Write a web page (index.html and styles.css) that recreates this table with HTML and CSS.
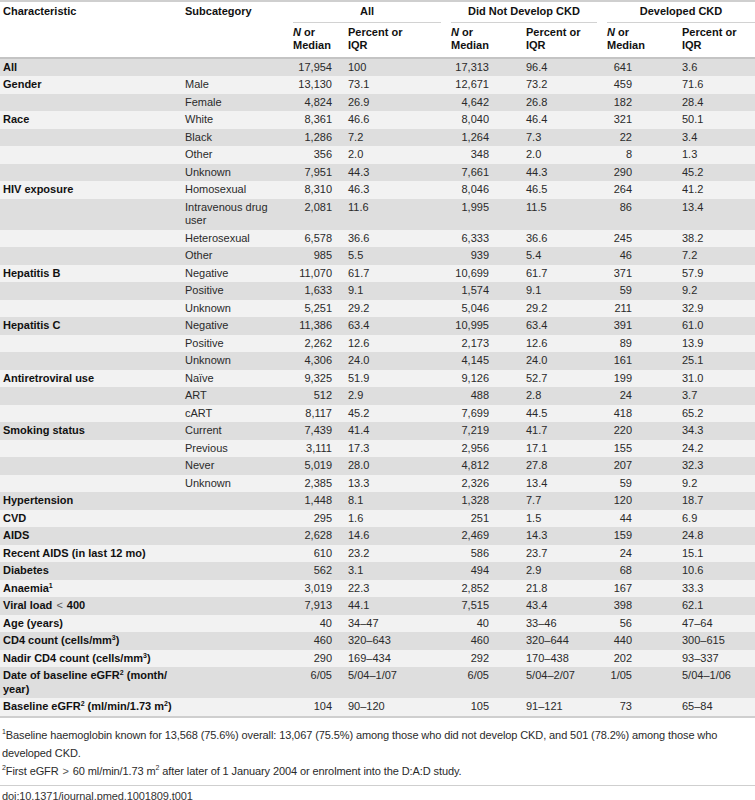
FILE: index.html
```html
<!DOCTYPE html>
<html lang="en">
<head>
    <meta charset="UTF-8">
    <meta name="viewport" content="width=device-width, initial-scale=1.0">
    <title>Table 1. Baseline characteristics</title>
    <link rel="stylesheet" href="styles.css">
</head>
<body>
    <table class="data">
        <colgroup>
            <col class="c-char">
            <col class="c-sub">
            <col class="c-n1">
            <col class="c-p1">
            <col class="c-n2">
            <col class="c-p2">
            <col class="c-n3">
            <col class="c-p3">
        </colgroup>
        <thead>
            <tr class="group-row">
                <th rowspan="2">Characteristic</th>
                <th rowspan="2">Subcategory</th>
                <th colspan="2" class="group"><div>All</div></th>
                <th colspan="2" class="group"><div>Did Not Develop CKD</div></th>
                <th colspan="2" class="group last"><div>Developed CKD</div></th>
            </tr>
            <tr class="sub-row">
                <th><i>N</i> or<br>Median</th>
                <th>Percent or<br>IQR</th>
                <th><i>N</i> or<br>Median</th>
                <th>Percent or<br>IQR</th>
                <th><i>N</i> or<br>Median</th>
                <th>Percent or<br>IQR</th>
            </tr>
        </thead>
        <tbody>
            <tr><th>All</th><td></td><td class="n"><span class="a">17,954</span></td><td>100</td><td class="n"><span class="b">17,313</span></td><td>96.4</td><td class="n"><span class="c">641</span></td><td>3.6</td></tr>
            <tr><th>Gender</th><td>Male</td><td class="n"><span class="a">13,130</span></td><td>73.1</td><td class="n"><span class="b">12,671</span></td><td>73.2</td><td class="n"><span class="c">459</span></td><td>71.6</td></tr>
            <tr><th></th><td>Female</td><td class="n"><span class="a">4,824</span></td><td>26.9</td><td class="n"><span class="b">4,642</span></td><td>26.8</td><td class="n"><span class="c">182</span></td><td>28.4</td></tr>
            <tr><th>Race</th><td>White</td><td class="n"><span class="a">8,361</span></td><td>46.6</td><td class="n"><span class="b">8,040</span></td><td>46.4</td><td class="n"><span class="c">321</span></td><td>50.1</td></tr>
            <tr><th></th><td>Black</td><td class="n"><span class="a">1,286</span></td><td>7.2</td><td class="n"><span class="b">1,264</span></td><td>7.3</td><td class="n"><span class="c">22</span></td><td>3.4</td></tr>
            <tr><th></th><td>Other</td><td class="n"><span class="a">356</span></td><td>2.0</td><td class="n"><span class="b">348</span></td><td>2.0</td><td class="n"><span class="c">8</span></td><td>1.3</td></tr>
            <tr><th></th><td>Unknown</td><td class="n"><span class="a">7,951</span></td><td>44.3</td><td class="n"><span class="b">7,661</span></td><td>44.3</td><td class="n"><span class="c">290</span></td><td>45.2</td></tr>
            <tr><th>HIV exposure</th><td>Homosexual</td><td class="n"><span class="a">8,310</span></td><td>46.3</td><td class="n"><span class="b">8,046</span></td><td>46.5</td><td class="n"><span class="c">264</span></td><td>41.2</td></tr>
            <tr><th></th><td>Intravenous drug user</td><td class="n"><span class="a">2,081</span></td><td>11.6</td><td class="n"><span class="b">1,995</span></td><td>11.5</td><td class="n"><span class="c">86</span></td><td>13.4</td></tr>
            <tr><th></th><td>Heterosexual</td><td class="n"><span class="a">6,578</span></td><td>36.6</td><td class="n"><span class="b">6,333</span></td><td>36.6</td><td class="n"><span class="c">245</span></td><td>38.2</td></tr>
            <tr><th></th><td>Other</td><td class="n"><span class="a">985</span></td><td>5.5</td><td class="n"><span class="b">939</span></td><td>5.4</td><td class="n"><span class="c">46</span></td><td>7.2</td></tr>
            <tr><th>Hepatitis B</th><td>Negative</td><td class="n"><span class="a">11,070</span></td><td>61.7</td><td class="n"><span class="b">10,699</span></td><td>61.7</td><td class="n"><span class="c">371</span></td><td>57.9</td></tr>
            <tr><th></th><td>Positive</td><td class="n"><span class="a">1,633</span></td><td>9.1</td><td class="n"><span class="b">1,574</span></td><td>9.1</td><td class="n"><span class="c">59</span></td><td>9.2</td></tr>
            <tr><th></th><td>Unknown</td><td class="n"><span class="a">5,251</span></td><td>29.2</td><td class="n"><span class="b">5,046</span></td><td>29.2</td><td class="n"><span class="c">211</span></td><td>32.9</td></tr>
            <tr><th>Hepatitis C</th><td>Negative</td><td class="n"><span class="a">11,386</span></td><td>63.4</td><td class="n"><span class="b">10,995</span></td><td>63.4</td><td class="n"><span class="c">391</span></td><td>61.0</td></tr>
            <tr><th></th><td>Positive</td><td class="n"><span class="a">2,262</span></td><td>12.6</td><td class="n"><span class="b">2,173</span></td><td>12.6</td><td class="n"><span class="c">89</span></td><td>13.9</td></tr>
            <tr><th></th><td>Unknown</td><td class="n"><span class="a">4,306</span></td><td>24.0</td><td class="n"><span class="b">4,145</span></td><td>24.0</td><td class="n"><span class="c">161</span></td><td>25.1</td></tr>
            <tr><th>Antiretroviral use</th><td>Naïve</td><td class="n"><span class="a">9,325</span></td><td>51.9</td><td class="n"><span class="b">9,126</span></td><td>52.7</td><td class="n"><span class="c">199</span></td><td>31.0</td></tr>
            <tr><th></th><td>ART</td><td class="n"><span class="a">512</span></td><td>2.9</td><td class="n"><span class="b">488</span></td><td>2.8</td><td class="n"><span class="c">24</span></td><td>3.7</td></tr>
            <tr><th></th><td>cART</td><td class="n"><span class="a">8,117</span></td><td>45.2</td><td class="n"><span class="b">7,699</span></td><td>44.5</td><td class="n"><span class="c">418</span></td><td>65.2</td></tr>
            <tr><th>Smoking status</th><td>Current</td><td class="n"><span class="a">7,439</span></td><td>41.4</td><td class="n"><span class="b">7,219</span></td><td>41.7</td><td class="n"><span class="c">220</span></td><td>34.3</td></tr>
            <tr><th></th><td>Previous</td><td class="n"><span class="a">3,111</span></td><td>17.3</td><td class="n"><span class="b">2,956</span></td><td>17.1</td><td class="n"><span class="c">155</span></td><td>24.2</td></tr>
            <tr><th></th><td>Never</td><td class="n"><span class="a">5,019</span></td><td>28.0</td><td class="n"><span class="b">4,812</span></td><td>27.8</td><td class="n"><span class="c">207</span></td><td>32.3</td></tr>
            <tr><th></th><td>Unknown</td><td class="n"><span class="a">2,385</span></td><td>13.3</td><td class="n"><span class="b">2,326</span></td><td>13.4</td><td class="n"><span class="c">59</span></td><td>9.2</td></tr>
            <tr><th>Hypertension</th><td></td><td class="n"><span class="a">1,448</span></td><td>8.1</td><td class="n"><span class="b">1,328</span></td><td>7.7</td><td class="n"><span class="c">120</span></td><td>18.7</td></tr>
            <tr><th>CVD</th><td></td><td class="n"><span class="a">295</span></td><td>1.6</td><td class="n"><span class="b">251</span></td><td>1.5</td><td class="n"><span class="c">44</span></td><td>6.9</td></tr>
            <tr><th>AIDS</th><td></td><td class="n"><span class="a">2,628</span></td><td>14.6</td><td class="n"><span class="b">2,469</span></td><td>14.3</td><td class="n"><span class="c">159</span></td><td>24.8</td></tr>
            <tr><th>Recent AIDS (in last 12 mo)</th><td></td><td class="n"><span class="a">610</span></td><td>23.2</td><td class="n"><span class="b">586</span></td><td>23.7</td><td class="n"><span class="c">24</span></td><td>15.1</td></tr>
            <tr><th>Diabetes</th><td></td><td class="n"><span class="a">562</span></td><td>3.1</td><td class="n"><span class="b">494</span></td><td>2.9</td><td class="n"><span class="c">68</span></td><td>10.6</td></tr>
            <tr><th>Anaemia<sup>1</sup></th><td></td><td class="n"><span class="a">3,019</span></td><td>22.3</td><td class="n"><span class="b">2,852</span></td><td>21.8</td><td class="n"><span class="c">167</span></td><td>33.3</td></tr>
            <tr><th>Viral load <span class="op">&lt;</span> 400</th><td></td><td class="n"><span class="a">7,913</span></td><td>44.1</td><td class="n"><span class="b">7,515</span></td><td>43.4</td><td class="n"><span class="c">398</span></td><td>62.1</td></tr>
            <tr><th>Age (years)</th><td></td><td class="n"><span class="a">40</span></td><td>34–47</td><td class="n"><span class="b">40</span></td><td>33–46</td><td class="n"><span class="c">56</span></td><td>47–64</td></tr>
            <tr><th>CD4 count (cells/mm<sup>3</sup>)</th><td></td><td class="n"><span class="a">460</span></td><td>320–643</td><td class="n"><span class="b">460</span></td><td>320–644</td><td class="n"><span class="c">440</span></td><td>300–615</td></tr>
            <tr><th>Nadir CD4 count (cells/mm<sup>3</sup>)</th><td></td><td class="n"><span class="a">290</span></td><td>169–434</td><td class="n"><span class="b">292</span></td><td>170–438</td><td class="n"><span class="c">202</span></td><td>93–337</td></tr>
            <tr><th>Date of baseline eGFR<sup>2</sup> (month/ year)</th><td></td><td class="n"><span class="a">6/05</span></td><td>5/04–1/07</td><td class="n"><span class="b">6/05</span></td><td>5/04–2/07</td><td class="n"><span class="c">1/05</span></td><td>5/04–1/06</td></tr>
            <tr><th colspan="2">Baseline eGFR<sup>2</sup> (ml/min/1.73 m<sup>2</sup>)</th><td class="n"><span class="a">104</span></td><td>90–120</td><td class="n"><span class="b">105</span></td><td>91–121</td><td class="n"><span class="c">73</span></td><td>65–84</td></tr>
        </tbody>
    </table>

    <div class="notes">
        <p><sup>1</sup>Baseline haemoglobin known for 13,568 (75.6%) overall: 13,067 (75.5%) among those who did not develop CKD, and 501 (78.2%) among those who developed CKD.</p>
        <p><sup>2</sup>First eGFR <span class="op">&gt;</span> 60 ml/min/1.73 m<sup>2</sup> after later of 1 January 2004 or enrolment into the D:A:D study.</p>
    </div>

    <div class="doi">doi:10.1371/journal.pmed.1001809.t001</div>
</body>
</html>
```

FILE: styles.css
```css
body {
    margin: 0;
    font-family: "Liberation Sans", Arial, Helvetica, sans-serif;
    font-size: 11px;
    color: #2a2a2a;
    background: #fff;
}

/* main table */
.data {
    width: 755px;
    table-layout: fixed;
    border-collapse: collapse;
    border-top: 2px solid #cfcfcf;
    border-bottom: 2px solid #cfcfcf;
}
.c-char { width: 182px; }
.c-sub { width: 108px; }
.c-n1 { width: 55px; }
.c-p1 { width: 103px; }
.c-n2 { width: 75px; }
.c-p2 { width: 81px; }
.c-n3 { width: 75px; }
.c-p3 { width: 76px; }

.data th,
.data td {
    padding: 2px 3px;
    line-height: 13.5px;
    text-align: left;
    vertical-align: top;
}
.data th {
    font-weight: bold;
    color: #111;
}

/* header */
.data thead th {
    background: #fff;
    padding-top: 3px;
}
.group-row th {
    padding-bottom: 3px;
}
.data th.group {
    padding: 3px 0 0 3px;
}
.group div {
    text-align: center;
    padding-bottom: 3px;
    margin-right: 7px;
    border-bottom: 1px solid #d2d2d2;
}
.group.last div {
    margin-right: 0;
}
.sub-row th {
    padding-bottom: 4px;
}
.data thead tr.sub-row th,
.data thead th[rowspan] {
    border-bottom: 2px solid #c4c4c4;
}

/* body rows */
.data tbody tr:nth-child(odd) { background: #dedede; }
.data tbody tr:nth-child(even) { background: #f2f2f2; }

.n span {
    display: inline-block;
    text-align: right;
}
.n .a { width: 39px; }
.n .b { width: 38px; }
.n .c { width: 25px; }

sup {
    font-size: 7px;
    line-height: 0;
    vertical-align: 4px;
}
.op {
    font-weight: normal;
    color: #555;
    padding: 0 1px;
}

/* footnotes */
.notes {
    padding: 8px 2px 5px 2px;
    border-bottom: 1px solid #cfcfcf;
    letter-spacing: -0.1px;
}
.notes p {
    margin: 0;
    line-height: 18px;
}
.notes sup {
    vertical-align: 5px;
}
.doi {
    padding: 4px 2px;
    letter-spacing: -0.1px;
    color: #333;
}
```
